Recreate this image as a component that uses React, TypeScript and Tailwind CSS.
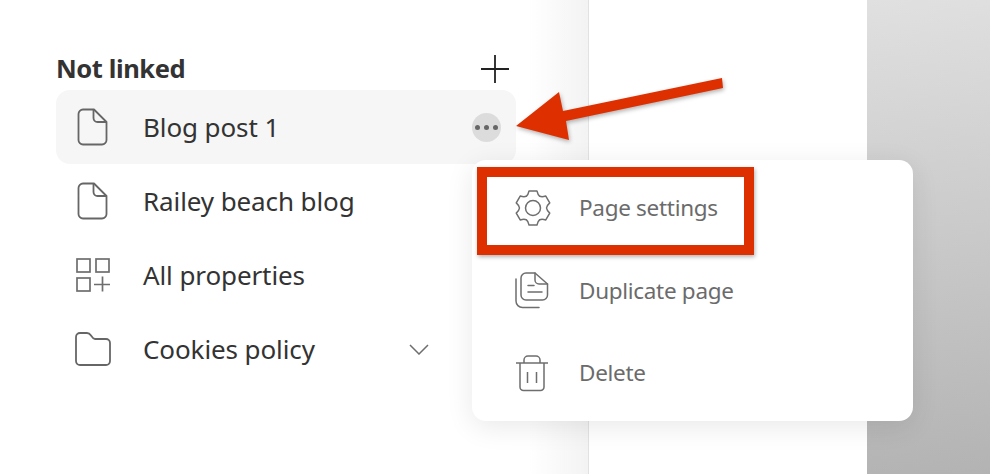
import type { ReactNode } from "react";

const font = { fontFamily: '"Noto Sans", sans-serif' };

// six lobed cog outline
function gearPath() {
  const pt = (deg: number, r: number) => {
    const a = (deg * Math.PI) / 180;
    return `${(18 + r * Math.cos(a)).toFixed(2)} ${(19 + r * Math.sin(a)).toFixed(2)}`;
  };
  let d = `M${pt(-120, 13.5)}`;
  for (let i = 0; i < 6; i++) {
    const a = -90 + i * 60;
    d += `Q${pt(a - 20, 14)} ${pt(a - 13, 17.5)}L${pt(a + 13, 17.5)}Q${pt(a + 20, 14)} ${pt(a + 30, 13.5)}`;
  }
  return d + "Z";
}

function GearIcon() {
  return (
    <svg width="36" height="38" viewBox="0 0 36 38" fill="none" stroke="#6e6e6e" strokeWidth="1.5" strokeLinejoin="round">
      <path d={gearPath()} />
      <circle cx="18" cy="19" r="7.500" />
    </svg>
  );
}

function FileIcon() {
  return (
    <svg width="31" height="38" viewBox="0 0 31 38" fill="none" stroke="#666666" strokeWidth="1.800" strokeLinejoin="round">
      <path d="M6 1.500h11l12.500 12.500v18a4.500 4.500 0 0 1-4.500 4.500H6A4.500 4.500 0 0 1 1.500 32V6A4.500 4.500 0 0 1 6 1.500Z" />
      <path d="M16.500 1.500v8.500a4 4 0 0 0 4 4h9" />
    </svg>
  );
}

function GridIcon() {
  return (
    <svg width="34" height="34" viewBox="0 0 34 34" fill="none" stroke="#6e6e6e" strokeWidth="1.700">
      <rect x="1" y="1" width="13" height="13" />
      <rect x="20" y="1" width="13" height="13" />
      <rect x="1" y="20" width="13" height="13" />
      <path d="M18 26.500h16M26.500 18.500v15" />
    </svg>
  );
}

function FolderIcon() {
  return (
    <svg width="36" height="34" viewBox="0 0 36 34" fill="none" stroke="#666666" strokeWidth="1.800" strokeLinejoin="round">
      <path d="M1 5a4 4 0 0 1 4-4h7c2 0 3 1 4 2.500S18 7 20 7h11a4 4 0 0 1 4 4v18a4 4 0 0 1-4 4H5a4 4 0 0 1-4-4Z" />
    </svg>
  );
}

function CopyIcon() {
  return (
    <svg width="34" height="37" viewBox="0 0 34 37" fill="none" stroke="#6e6e6e" strokeWidth="1.500" strokeLinejoin="round" strokeLinecap="round">
      <path d="M11 1h9l12.500 11v11a5 5 0 0 1-5 5H11a5 5 0 0 1-5-5V6a5 5 0 0 1 5-5Z" />
      <path d="M20 1v7a4 4 0 0 0 4 4h8.500" />
      <path d="M13 13.500h6M13 20h14" />
      <path d="M1 7v22a6.500 6.500 0 0 0 6.500 6.500H24" />
    </svg>
  );
}

function TrashIcon() {
  return (
    <svg width="34" height="37" viewBox="0 0 34 37" fill="none" stroke="#6e6e6e" strokeWidth="1.500" strokeLinejoin="round">
      <path d="M1 8h32" />
      <path d="M9 8V5a4 4 0 0 1 4-4h8a4 4 0 0 1 4 4v3" />
      <path d="M5 8v24a3.500 3.500 0 0 0 3.500 3.500h17A3.500 3.500 0 0 0 29 32V8" />
      <path d="M12.500 17v11M21.500 17v11" />
    </svg>
  );
}

function Row({ icon, label, active, children }: { icon: ReactNode; label: string; active?: boolean; children?: ReactNode }) {
  return (
    <div className={`flex h-[74px] w-[460px] items-center rounded-[14px] ${active ? "bg-[#f6f6f6]" : ""}`}>
      <div className="mr-[14px] flex w-[73px] shrink-0 justify-center">{icon}</div>
      <span className="flex-1 text-[26px] tracking-[-0.1px] text-[#333333]">{label}</span>
      {children}
    </div>
  );
}

function MenuItem({ icon, label }: { icon: ReactNode; label: string }) {
  return (
    <div className="flex h-[82.5px] items-center">
      <div className="w-[107px] shrink-0 pl-[43px]">{icon}</div>
      <span className="text-[22.5px] tracking-[-0.3px] text-[#6b6b6b]">{label}</span>
    </div>
  );
}

export default function App() {
  return (
    <div className="relative flex h-[474px] w-[990px] overflow-hidden bg-white" style={font}>
      <div className="w-[589px] shrink-0 border-r border-[#e2e2e2] bg-[linear-gradient(90deg,#ffffff_90%,#f3f3f3_100%)] pl-[56px] pt-[47px]">
        <div className="flex h-[43px] w-[460px] items-center justify-between pt-[1px]">
          <span className="text-[25.5px] leading-none font-bold tracking-[-0.4px] text-[#333333]">Not linked</span>
          <svg className="mr-[6px]" width="30" height="30" viewBox="0 0 30 30" stroke="#222222" strokeWidth="1.800">
            <path d="M1 15h28M15 1v28" />
          </svg>
        </div>
        <Row icon={<FileIcon />} label="Blog post 1" active>
          <div className="mr-[15px] flex h-[29px] w-[29px] items-center justify-center gap-[4px] rounded-full bg-[#dcdcdc]">
            <span className="h-[5px] w-[5px] rounded-full bg-[#666666]" />
            <span className="h-[5px] w-[5px] rounded-full bg-[#666666]" />
            <span className="h-[5px] w-[5px] rounded-full bg-[#666666]" />
          </div>
        </Row>
        <Row icon={<FileIcon />} label="Railey beach blog" />
        <Row icon={<GridIcon />} label="All properties" />
        <Row icon={<FolderIcon />} label="Cookies policy">
          <svg className="mr-[87px]" width="20" height="11" viewBox="0 0 20 11" fill="none" stroke="#6e6e6e" strokeWidth="1.500">
            <path d="M1 1l9 9 9-9" />
          </svg>
        </Row>
      </div>
      <div className="flex-1" />
      <div className="w-[123px] shrink-0 bg-[linear-gradient(175deg,#e0e0e0_0%,#b3b3b3_100%)]" />

      <div className="absolute left-[472px] top-[160px] w-[441px] rounded-[14px] bg-white pt-[7px] pb-[6.5px] shadow-[0_6px_28px_rgba(0,0,0,0.09)]">
        <MenuItem icon={<GearIcon />} label="Page settings" />
        <MenuItem icon={<CopyIcon />} label="Duplicate page" />
        <MenuItem icon={<TrashIcon />} label="Delete" />
      </div>

      <div className="absolute left-[477px] top-[167px] h-[88px] w-[277px] border-[10px] border-[#de2f00] shadow-[1px_2px_4px_rgba(0,0,0,0.3)]" />

      <svg className="absolute left-[510px] top-[70px] drop-shadow-[1px_2px_2px_rgba(0,0,0,0.3)]" width="220" height="80" viewBox="0 0 220 80" fill="#de2f00">
        <path d="M6 56L49 22L53 41L212 8L213 18L56 51L59 70Z" />
      </svg>
    </div>
  );
}
